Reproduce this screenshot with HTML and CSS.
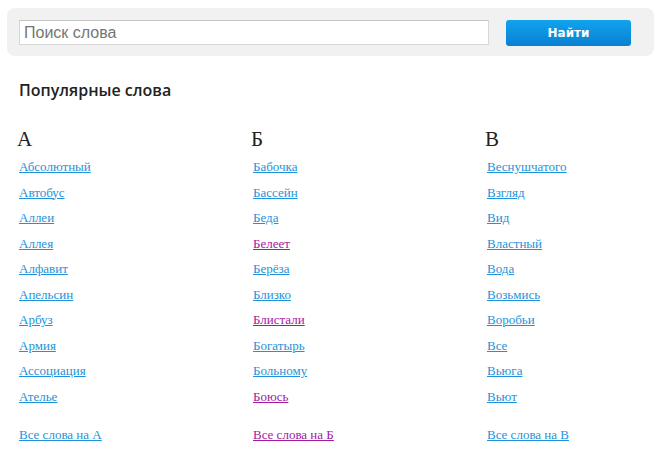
FILE: index.html
```html
<!DOCTYPE html>
<html>
<head>
  <meta charset="utf-8">
  <title>Популярные слова</title>
  <link rel="stylesheet" href="styles.css">
</head>
<body>
  <form class="search">
    <input type="text" class="search-input" placeholder="Поиск слова">
    <button type="submit" class="search-btn">Найти</button>
  </form>

  <h2 class="title">Популярные слова</h2>

  <div class="letters">
    <div class="letter">
      <h3>А</h3>
      <ul>
        <li><a href="#">Абсолютный</a></li>
        <li><a href="#">Автобус</a></li>
        <li><a href="#">Аллеи</a></li>
        <li><a href="#">Аллея</a></li>
        <li><a href="#">Алфавит</a></li>
        <li><a href="#">Апельсин</a></li>
        <li><a href="#">Арбуз</a></li>
        <li><a href="#">Армия</a></li>
        <li><a href="#">Ассоциация</a></li>
        <li><a href="#">Ателье</a></li>
      </ul>
      <a class="all" href="#">Все слова на А</a>
    </div>
    <div class="letter">
      <h3>Б</h3>
      <ul>
        <li><a href="#">Бабочка</a></li>
        <li><a href="#">Бассейн</a></li>
        <li><a href="#">Беда</a></li>
        <li><a class="visited" href="#">Белеет</a></li>
        <li><a href="#">Берёза</a></li>
        <li><a href="#">Близко</a></li>
        <li><a class="visited" href="#">Блистали</a></li>
        <li><a href="#">Богатырь</a></li>
        <li><a href="#">Больному</a></li>
        <li><a class="visited" href="#">Боюсь</a></li>
      </ul>
      <a class="all visited" href="#">Все слова на Б</a>
    </div>
    <div class="letter">
      <h3>В</h3>
      <ul>
        <li><a href="#">Веснушчатого</a></li>
        <li><a href="#">Взгляд</a></li>
        <li><a href="#">Вид</a></li>
        <li><a href="#">Властный</a></li>
        <li><a href="#">Вода</a></li>
        <li><a href="#">Возьмись</a></li>
        <li><a href="#">Воробьи</a></li>
        <li><a href="#">Все</a></li>
        <li><a href="#">Вьюга</a></li>
        <li><a href="#">Вьют</a></li>
      </ul>
      <a class="all" href="#">Все слова на В</a>
    </div>
  </div>
</body>
</html>
```

FILE: styles.css
```css
/* page */
body {
  margin: 0;
  padding: 8px 7px;
  background: #fff;
  color: #222;
  font-family: "Liberation Serif", serif;
}

/* search bar */
.search {
  display: flex;
  align-items: center;
  height: 48px;
  padding: 1px 23px 0 12px;
  box-sizing: border-box;
  background: #f1f1f1;
  border-radius: 8px;
}

.search-input {
  width: 470px;
  height: 25px;
  box-sizing: border-box;
  margin: 0;
  padding: 0 4px;
  border: 1px solid #d6d6d6;
  border-top-color: #c4c4c4;
  background: #fff;
  font-family: "Liberation Sans", Arial, sans-serif;
  font-size: 16px;
  color: #333;
  outline: none;
}

.search-input::placeholder {
  color: #757575;
}

.search-btn {
  margin-left: auto;
  width: 125px;
  height: 26px;
  border: none;
  border-radius: 3px;
  background: linear-gradient(#11a3ee, #0a80d2);
  color: #fff;
  font-family: "DejaVu Sans", Verdana, sans-serif;
  font-weight: bold;
  font-size: 12px;
  cursor: pointer;
}

/* heading */
.title {
  margin: 25px 0 0 12px;
  font-family: "Open Sans", "DejaVu Sans", sans-serif;
  font-size: 16px;
  font-weight: 600;
  line-height: 18px;
  color: #222;
}

/* letter columns */
.letters {
  display: grid;
  grid-template-columns: 234px 234px 1fr;
  margin: 28px 0 0 10px;
}

.letter h3 {
  margin: 0;
  font-family: "Liberation Serif", serif;
  font-size: 21px;
  font-weight: normal;
  line-height: 24px;
  color: #222;
}

.letter ul {
  list-style: none;
  margin: 2px 0 0 2px;
  padding: 0;
}

.letter li {
  height: 25.5px;
  line-height: 25.5px;
}

.letter a {
  font-family: "Liberation Serif", Georgia, serif;
  font-size: 13px;
  color: #1e92da;
}

.letter a.visited {
  color: #a3189f;
}

.letter .all {
  display: block;
  margin: 20px 0 0 2px;
  line-height: 14px;
}
```
